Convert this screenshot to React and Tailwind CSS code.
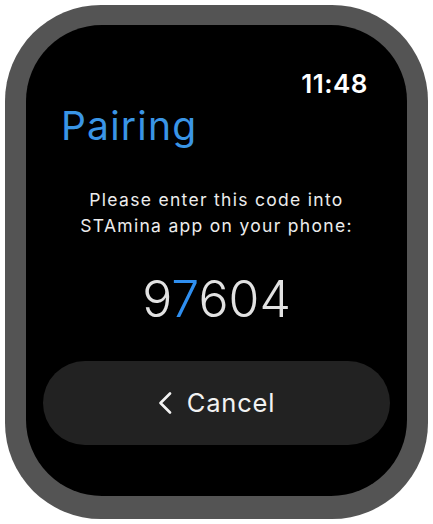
import React from 'react';

const Chevron = () => (
    <svg width="14" height="22" viewBox="0 0 14 22" fill="none" className="shrink-0">
        <polyline points="12,1.5 2.5,11 12,20.5" stroke="#f2f2f2" strokeWidth="2.6" strokeLinecap="round" strokeLinejoin="round" />
    </svg>
);

const App = () => {
    const digits = ['9', '7', '6', '0', '4'];

    return (
        <div className="w-[433px] h-[524px] bg-white pt-[5px] pl-[5px]" style={{ fontFamily: 'Inter, "Noto Sans", sans-serif' }}>
            <div className="w-[423px] h-[514px] bg-[#545454] rounded-[96px] pt-[20px] pl-[21px] pr-[21px] pb-[23px]">
                <div className="w-full h-full bg-black rounded-[76px] flex flex-col">
                    {/* status bar */}
                    <div className="mt-[46px] pr-[39px] text-right text-white text-[26px] leading-[26px] font-semibold tracking-[0.5px]">11:48</div>

                    <h1 className="mt-[9px] pl-[35px] text-[#3a95e6] text-[39px] leading-[39px] font-normal tracking-[1.2px]">Pairing</h1>

                    <p className="mt-[42px] text-center text-[#ececec] text-[17.5px] leading-[26px] tracking-[1.3px]">
                        Please enter this code into
                        <br />
                        STAmina app on your phone:
                    </p>

                    <div className="mt-[35px] text-center text-[#e2e2e2] text-[50px] leading-[50px] font-light">
                        {digits.map((d, i) => (
                            <span key={i} className={i === 1 ? 'text-[#2f8ff0]' : ''}>{d}</span>
                        ))}
                    </div>

                    <button className="mt-[37px] mx-[17px] h-[84px] rounded-[42px] bg-[#222222] flex items-center justify-center gap-[15px] text-[#f2f2f2] text-[25.5px] tracking-[0.8px]">
                        <Chevron />
                        <span>Cancel</span>
                    </button>
                </div>
            </div>
        </div>
    );
};

export default App;
